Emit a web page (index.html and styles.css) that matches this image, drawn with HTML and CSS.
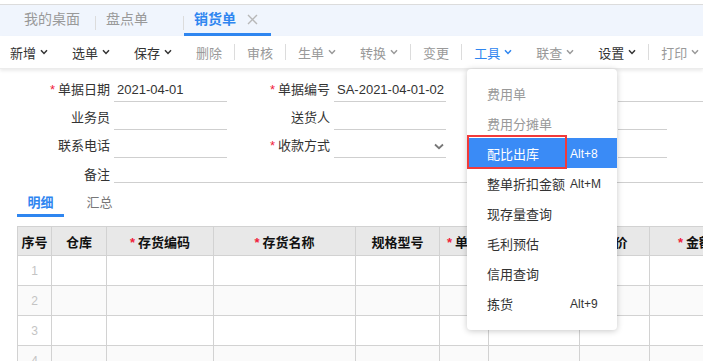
FILE: index.html
```html
<!DOCTYPE html>
<html lang="zh">
<head>
  <meta charset="UTF-8">
  <title>销货单</title>
  <link rel="stylesheet" href="styles.css">
</head>
<body>

  <div class="tabbar">
    <div class="tab tab-home">我的桌面</div>
    <span class="tab-sep"></span>
    <div class="tab">盘点单</div>
    <span class="tab-sep"></span>
    <div class="tab active">销货单
      <svg class="close" width="11" height="11" viewBox="0 0 11 11"><path d="M1 1L10 10M10 1L1 10" stroke="#b8b8b8" stroke-width="1.4"/></svg>
    </div>
  </div>

  <div class="toolbar">
    <div class="tb-item">新增<svg class="chev" width="8" height="6" viewBox="0 0 8 6"><path d="M1 1.2L4 4.4L7 1.2" fill="none" stroke="currentColor" stroke-width="1.5"/></svg></div>
    <div class="tb-item">选单<svg class="chev" width="8" height="6" viewBox="0 0 8 6"><path d="M1 1.2L4 4.4L7 1.2" fill="none" stroke="currentColor" stroke-width="1.5"/></svg></div>
    <div class="tb-item">保存<svg class="chev" width="8" height="6" viewBox="0 0 8 6"><path d="M1 1.2L4 4.4L7 1.2" fill="none" stroke="currentColor" stroke-width="1.5"/></svg></div>
    <div class="tb-item off">删除</div>
    <span class="tb-sep"></span>
    <div class="tb-item off">审核</div>
    <span class="tb-sep"></span>
    <div class="tb-item off">生单<svg class="chev" width="8" height="6" viewBox="0 0 8 6"><path d="M1 1.2L4 4.4L7 1.2" fill="none" stroke="currentColor" stroke-width="1.5"/></svg></div>
    <div class="tb-item off">转换<svg class="chev" width="8" height="6" viewBox="0 0 8 6"><path d="M1 1.2L4 4.4L7 1.2" fill="none" stroke="currentColor" stroke-width="1.5"/></svg></div>
    <span class="tb-sep"></span>
    <div class="tb-item off">变更</div>
    <span class="tb-sep"></span>
    <div class="tb-item blue">工具<svg class="chev" width="8" height="6" viewBox="0 0 8 6"><path d="M1 1.2L4 4.4L7 1.2" fill="none" stroke="currentColor" stroke-width="1.5"/></svg></div>
    <div class="tb-item off">联查<svg class="chev" width="8" height="6" viewBox="0 0 8 6"><path d="M1 1.2L4 4.4L7 1.2" fill="none" stroke="currentColor" stroke-width="1.5"/></svg></div>
    <div class="tb-item">设置<svg class="chev" width="8" height="6" viewBox="0 0 8 6"><path d="M1 1.2L4 4.4L7 1.2" fill="none" stroke="currentColor" stroke-width="1.5"/></svg></div>
    <span class="tb-sep"></span>
    <div class="tb-item off">打印<svg class="chev" width="8" height="6" viewBox="0 0 8 6"><path d="M1 1.2L4 4.4L7 1.2" fill="none" stroke="currentColor" stroke-width="1.5"/></svg></div>
  </div>

  <div class="form">
    <div class="lbl"><span class="req">*</span> 单据日期</div>
    <div class="fld">2021-04-01</div>
    <div class="lbl"><span class="req">*</span> 单据编号</div>
    <div class="fld">SA-2021-04-01-02</div>
    <div class="lbl"></div>
    <div class="fld"></div>

    <div class="lbl">业务员</div>
    <div class="fld"></div>
    <div class="lbl">送货人</div>
    <div class="fld"></div>
    <div class="lbl"></div>
    <div class="fld short"></div>

    <div class="lbl">联系电话</div>
    <div class="fld"></div>
    <div class="lbl"><span class="req">*</span> 收款方式</div>
    <div class="fld select"><svg width="10" height="7" viewBox="0 0 10 7"><path d="M1 1.5L5 5.2L9 1.5" fill="none" stroke="#777" stroke-width="1.8"/></svg></div>
    <div class="lbl"></div>
    <div class="fld short"></div>

    <div class="lbl last">备注</div>
    <div class="fld last wide"></div>
  </div>

  <div class="detail-tabs">
    <div class="dtab active">明细</div>
    <div class="dtab">汇总</div>
  </div>

  <table class="grid">
    <colgroup>
      <col style="width:34px"><col style="width:55px"><col style="width:107px"><col style="width:142px">
      <col style="width:84px"><col style="width:49px"><col style="width:91px"><col style="width:70px"><col style="width:80px">
    </colgroup>
    <thead>
      <tr>
        <th>序号</th>
        <th>仓库</th>
        <th><span class="req">*</span>存货编码</th>
        <th><span class="req">*</span>存货名称</th>
        <th>规格型号</th>
        <th class="left"><span class="req">*</span>单位</th>
        <th></th>
        <th>单价</th>
        <th class="left far"><span class="req">*</span>金额</th>
      </tr>
    </thead>
    <tbody>
      <tr><td class="no">1</td><td></td><td></td><td></td><td></td><td></td><td></td><td></td><td></td></tr>
      <tr><td class="no">2</td><td></td><td></td><td></td><td></td><td></td><td></td><td></td><td></td></tr>
      <tr><td class="no">3</td><td></td><td></td><td></td><td></td><td></td><td></td><td></td><td></td></tr>
      <tr><td class="no">4</td><td></td><td></td><td></td><td></td><td></td><td></td><td></td><td></td></tr>
    </tbody>
  </table>

  <div class="menu">
    <div class="menu-item off">费用单</div>
    <div class="menu-item off">费用分摊单</div>
    <div class="menu-item hot"><span class="name">配比出库</span><span class="key">Alt+8</span><span class="mark"></span></div>
    <div class="menu-item"><span class="name">整单折扣金额</span><span class="key">Alt+M</span></div>
    <div class="menu-item">现存量查询</div>
    <div class="menu-item">毛利预估</div>
    <div class="menu-item">信用查询</div>
    <div class="menu-item"><span class="name">拣货</span><span class="key">Alt+9</span></div>
  </div>

</body>
</html>
```

FILE: styles.css
```css
body {
  margin: 0;
  font-family: "Liberation Sans", "Noto Sans CJK SC", sans-serif;
  font-size: 13px;
  color: #333;
  background: #fff;
  overflow: hidden;
  position: relative;
  height: 361px;
}

/* top tabs */
.tabbar {
  margin-top: 4px;
  border-top: 1px solid #dcdcdc;
  height: 31px;
  background: #f0f5fd;
  display: flex;
  align-items: flex-start;
  padding-left: 14px;
}

.tab {
  width: 77px;
  padding-left: 10px;
  height: 28px;
  line-height: 28px;
  font-size: 14px;
  color: #999;
  border-bottom: 3px solid transparent;
  display: flex;
  align-items: center;
  flex-shrink: 0;
}

.tab-home {
  width: 71px;
}

.tab.active {
  color: #2f86f0;
  font-weight: bold;
  border-bottom-color: #2f86f0;
}

.tab .close {
  margin-left: 11px;
}

.tab-sep {
  width: 1px;
  height: 14px;
  margin-top: 11px;
  background: #dcdcdc;
}

/* toolbar */
.toolbar {
  height: 32px;
  display: flex;
  align-items: center;
  box-shadow: 0 2px 3px rgba(0,0,0,0.08);
  border-bottom: 1px solid #ececec;
  position: relative;
  overflow: hidden;
}

.tb-item {
  padding: 0 12px;
  display: flex;
  align-items: center;
  color: #333;
  white-space: nowrap;
  flex-shrink: 0;
}

.tb-item:first-child {
  padding-left: 10px;
}

.tb-item.off {
  color: #999;
}

.tb-item.blue {
  color: #2f86f0;
}

.chev {
  margin-left: 4px;
  margin-top: -1px;
}

.tb-sep {
  width: 1px;
  height: 16px;
  background: #dcdcdc;
  flex-shrink: 0;
}

/* header form */
.form {
  display: grid;
  grid-template-columns: 114px 113px 107px 112px 172px 100px;
  grid-template-rows: 30px 28px 28px 25px;
  padding-top: 3px;
}

.lbl {
  padding-right: 4px;
  display: flex;
  justify-content: flex-end;
  align-items: flex-end;
  line-height: 20px;
  padding-bottom: 2px;
  color: #333;
  white-space: nowrap;
}

.req {
  color: #f0213a;
  margin-right: 3px;
}

.fld {
  border-bottom: 1px solid #cfcfcf;
  display: flex;
  align-items: flex-end;
  line-height: 20px;
  padding: 0 0 1px 3px;
  color: #333;
}

.fld.short {
  width: 46px;
}

.fld.select {
  justify-content: flex-end;
  padding-right: 2px;
  padding-bottom: 7px;
}

.lbl.last, .fld.last {
  line-height: 12px;
}

.fld.wide {
  grid-column: 2 / -1;
}

/* detail tabs */
.detail-tabs {
  display: flex;
  margin: 10px 0 0 17px;
}

.dtab {
  width: 47px;
  text-align: center;
  line-height: 20px;
  padding-bottom: 1px;
  border-bottom: 3px solid transparent;
  color: #777;
  margin-right: 12px;
}

.dtab.active {
  color: #2f86f0;
  font-weight: bold;
  border-bottom-color: #2f86f0;
}

/* table */
.grid {
  margin: 9px 0 0 17px;
  border-collapse: collapse;
  table-layout: fixed;
  width: 712px;
}

.grid th {
  height: 28px;
  background: #e8e8e8;
  border: 1px solid #d2d2d2;
  font-weight: bold;
  color: #111;
  padding: 0;
  white-space: nowrap;
  overflow: hidden;
}

.grid th.left {
  text-align: left;
  padding-left: 7px;
}

.grid th.far {
  padding-left: 28px;
}

.grid td {
  height: 29px;
  border: 1px solid #d2d2d2;
  padding: 0;
}

.grid tbody tr:nth-child(even) td {
  background: #fafafa;
}

.grid td.no {
  text-align: center;
  color: #c4c4c4;
  font-size: 12px;
}

/* dropdown menu */
.menu {
  position: absolute;
  left: 467px;
  top: 69px;
  width: 150px;
  padding: 9px 0 12px;
  background: #fff;
  border-radius: 4px;
  box-shadow: 0 1px 6px rgba(0,0,0,0.22);
  z-index: 5;
}

.menu-item {
  height: 30px;
  display: flex;
  align-items: center;
  padding: 0 0 0 20px;
  color: #333;
  position: relative;
  white-space: nowrap;
}

.menu-item.off {
  color: #999;
}

.menu-item.hot {
  background: #3a8bf6;
  color: #fff;
}

.menu-item .name {
  width: 83px;
}

.key {
  font-size: 12px;
  padding-top: 2px;
}

.mark {
  position: absolute;
  left: 0;
  top: -3px;
  width: 96px;
  height: 30px;
  border: 2px solid #f23a3a;
}
```
